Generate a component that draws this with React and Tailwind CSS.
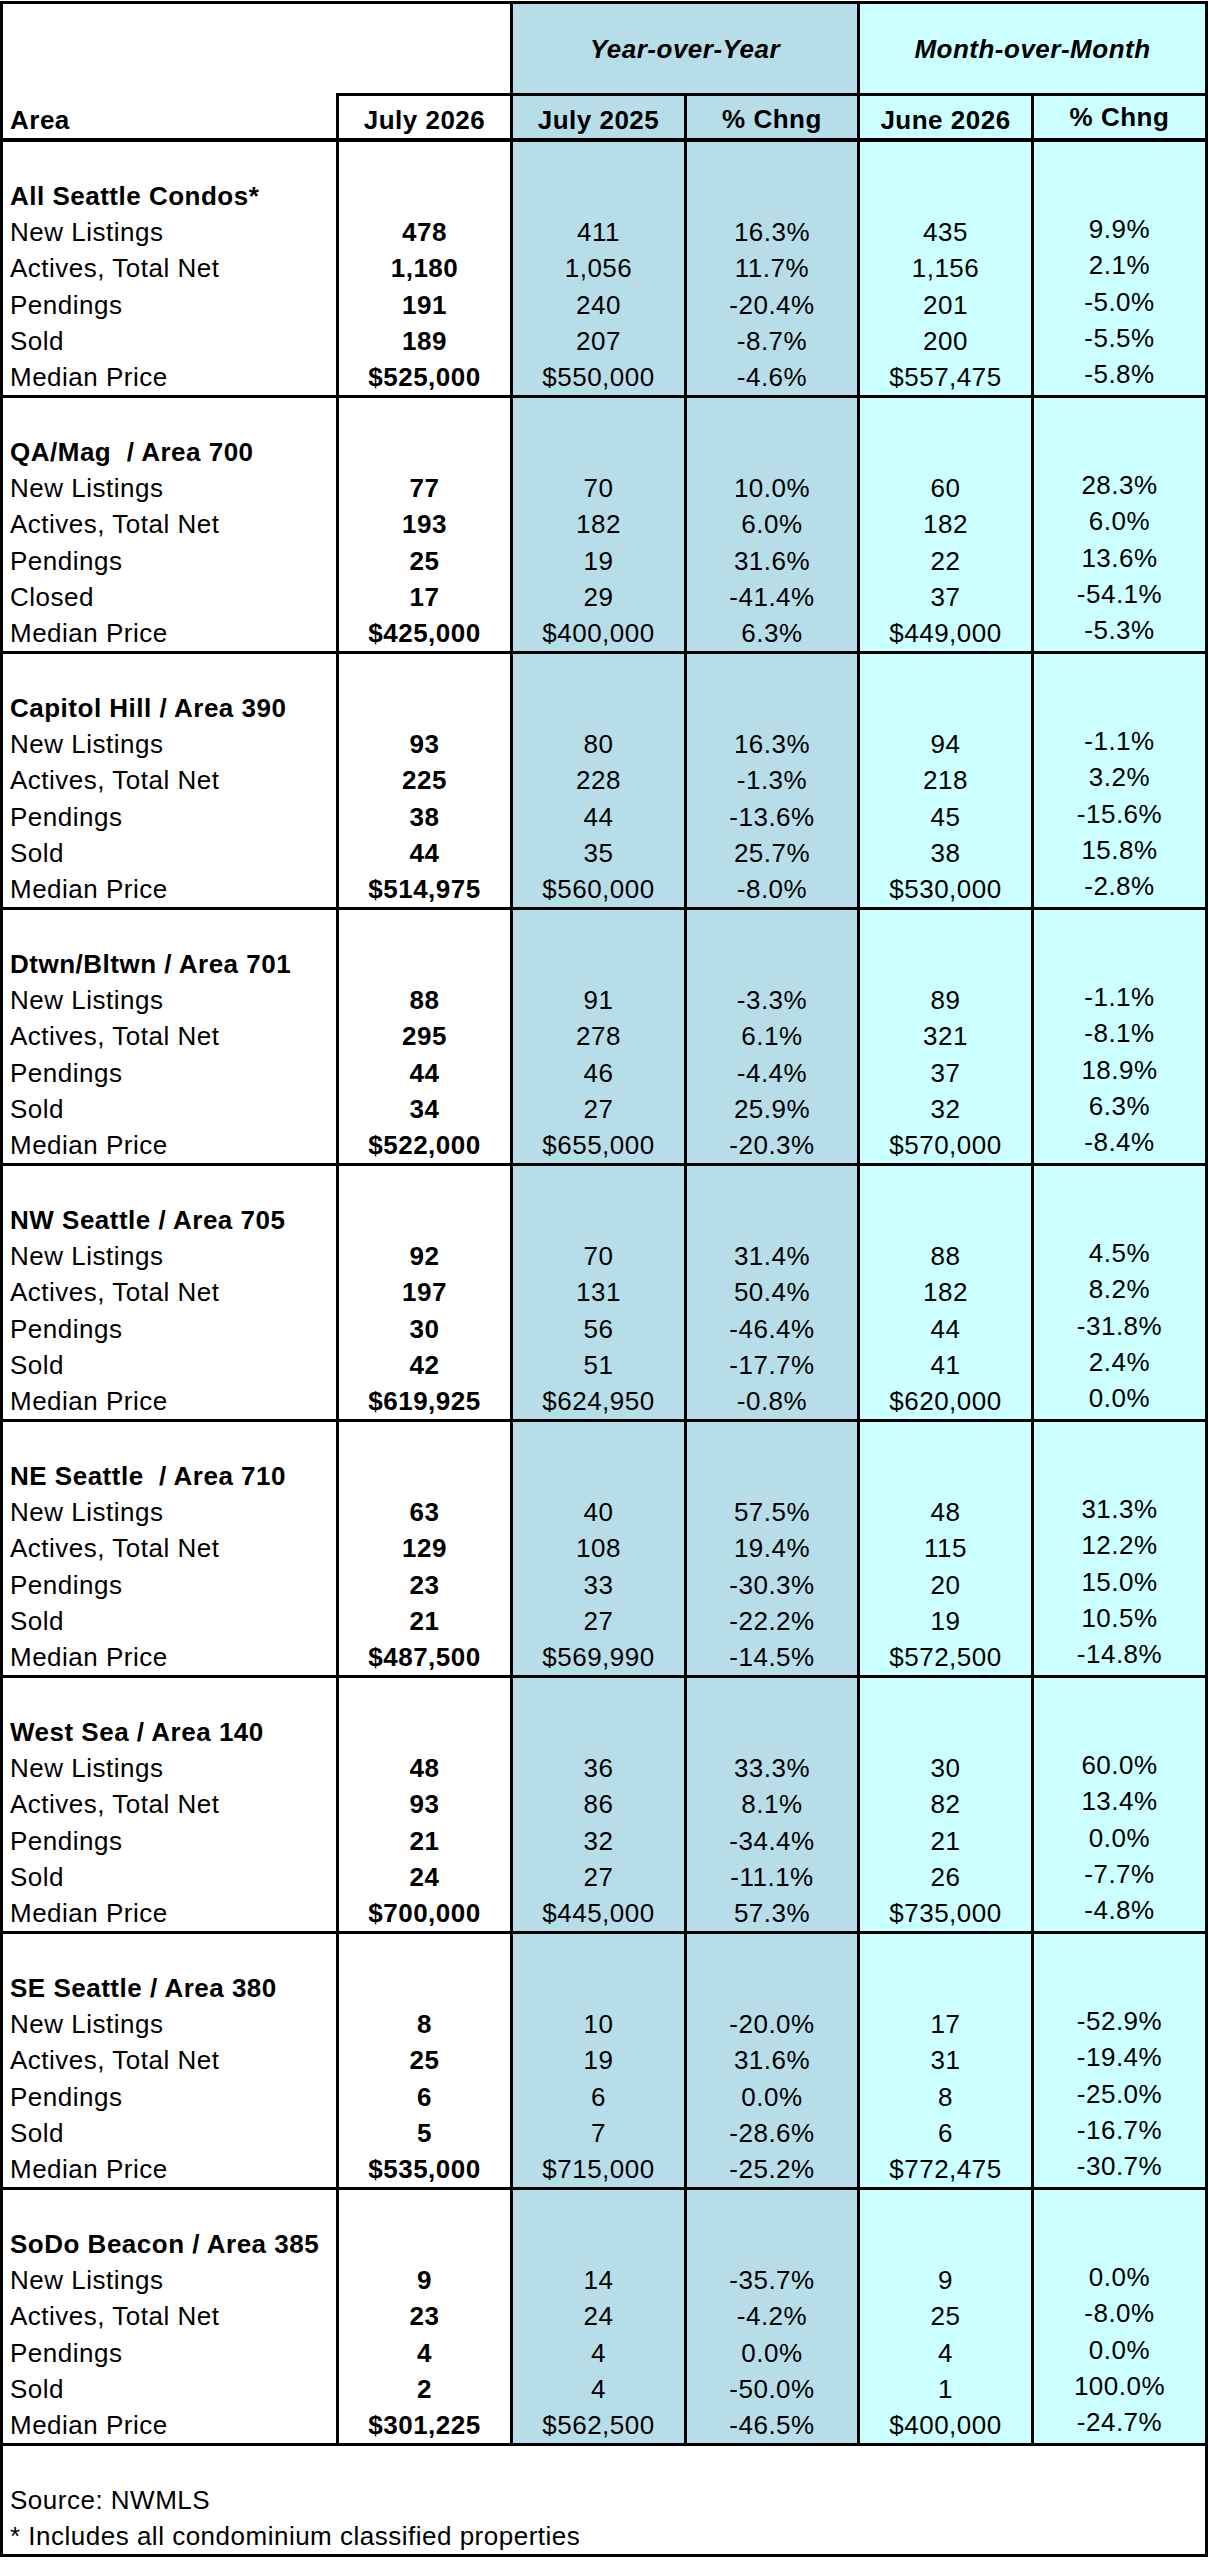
const blocks = [
  {
    title: "All Seattle Condos*",
    rows: [
      ["New Listings", "478", "411", "16.3%", "435", "9.9%"],
      ["Actives, Total Net", "1,180", "1,056", "11.7%", "1,156", "2.1%"],
      ["Pendings", "191", "240", "-20.4%", "201", "-5.0%"],
      ["Sold", "189", "207", "-8.7%", "200", "-5.5%"],
      ["Median Price", "$525,000", "$550,000", "-4.6%", "$557,475", "-5.8%"],
    ],
  },
  {
    title: "QA/Mag  / Area 700",
    rows: [
      ["New Listings", "77", "70", "10.0%", "60", "28.3%"],
      ["Actives, Total Net", "193", "182", "6.0%", "182", "6.0%"],
      ["Pendings", "25", "19", "31.6%", "22", "13.6%"],
      ["Closed", "17", "29", "-41.4%", "37", "-54.1%"],
      ["Median Price", "$425,000", "$400,000", "6.3%", "$449,000", "-5.3%"],
    ],
  },
  {
    title: "Capitol Hill / Area 390",
    rows: [
      ["New Listings", "93", "80", "16.3%", "94", "-1.1%"],
      ["Actives, Total Net", "225", "228", "-1.3%", "218", "3.2%"],
      ["Pendings", "38", "44", "-13.6%", "45", "-15.6%"],
      ["Sold", "44", "35", "25.7%", "38", "15.8%"],
      ["Median Price", "$514,975", "$560,000", "-8.0%", "$530,000", "-2.8%"],
    ],
  },
  {
    title: "Dtwn/Bltwn / Area 701",
    rows: [
      ["New Listings", "88", "91", "-3.3%", "89", "-1.1%"],
      ["Actives, Total Net", "295", "278", "6.1%", "321", "-8.1%"],
      ["Pendings", "44", "46", "-4.4%", "37", "18.9%"],
      ["Sold", "34", "27", "25.9%", "32", "6.3%"],
      ["Median Price", "$522,000", "$655,000", "-20.3%", "$570,000", "-8.4%"],
    ],
  },
  {
    title: "NW Seattle / Area 705",
    rows: [
      ["New Listings", "92", "70", "31.4%", "88", "4.5%"],
      ["Actives, Total Net", "197", "131", "50.4%", "182", "8.2%"],
      ["Pendings", "30", "56", "-46.4%", "44", "-31.8%"],
      ["Sold", "42", "51", "-17.7%", "41", "2.4%"],
      ["Median Price", "$619,925", "$624,950", "-0.8%", "$620,000", "0.0%"],
    ],
  },
  {
    title: "NE Seattle  / Area 710",
    rows: [
      ["New Listings", "63", "40", "57.5%", "48", "31.3%"],
      ["Actives, Total Net", "129", "108", "19.4%", "115", "12.2%"],
      ["Pendings", "23", "33", "-30.3%", "20", "15.0%"],
      ["Sold", "21", "27", "-22.2%", "19", "10.5%"],
      ["Median Price", "$487,500", "$569,990", "-14.5%", "$572,500", "-14.8%"],
    ],
  },
  {
    title: "West Sea / Area 140",
    rows: [
      ["New Listings", "48", "36", "33.3%", "30", "60.0%"],
      ["Actives, Total Net", "93", "86", "8.1%", "82", "13.4%"],
      ["Pendings", "21", "32", "-34.4%", "21", "0.0%"],
      ["Sold", "24", "27", "-11.1%", "26", "-7.7%"],
      ["Median Price", "$700,000", "$445,000", "57.3%", "$735,000", "-4.8%"],
    ],
  },
  {
    title: "SE Seattle / Area 380",
    rows: [
      ["New Listings", "8", "10", "-20.0%", "17", "-52.9%"],
      ["Actives, Total Net", "25", "19", "31.6%", "31", "-19.4%"],
      ["Pendings", "6", "6", "0.0%", "8", "-25.0%"],
      ["Sold", "5", "7", "-28.6%", "6", "-16.7%"],
      ["Median Price", "$535,000", "$715,000", "-25.2%", "$772,475", "-30.7%"],
    ],
  },
  {
    title: "SoDo Beacon / Area 385",
    rows: [
      ["New Listings", "9", "14", "-35.7%", "9", "0.0%"],
      ["Actives, Total Net", "23", "24", "-4.2%", "25", "-8.0%"],
      ["Pendings", "4", "4", "0.0%", "4", "0.0%"],
      ["Sold", "2", "4", "-50.0%", "1", "100.0%"],
      ["Median Price", "$301,225", "$562,500", "-46.5%", "$400,000", "-24.7%"],
    ],
  },
];

const Row = ({ cells, title }) => (
  <div className="flex h-[36.15px]">
    <div
      className={
        "w-[333px] pl-[7px] flex items-center whitespace-pre " +
        (title ? "font-bold" : "")
      }
    >
      {cells[0]}
    </div>
    <div className="w-[174px] border-l-[3px] border-black flex items-center justify-center font-bold">
      {cells[1]}
    </div>
    <div className="w-[174px] border-l-[3px] border-black bg-[#b7dee8] flex items-center justify-center">
      {cells[2]}
    </div>
    <div className="w-[173px] border-l-[3px] border-black bg-[#b7dee8] flex items-center justify-center">
      {cells[3]}
    </div>
    <div className="w-[174px] border-l-[3px] border-black bg-[#ccffff] flex items-center justify-center">
      {cells[4]}
    </div>
    <div className="w-[174px] border-l-[3px] border-black bg-[#ccffff] flex items-center justify-center pb-[6px]">
      {cells[5]}
    </div>
  </div>
);

const App = () => {
  return (
    <div className="bg-white w-[1209px] h-[2560px] pt-px text-black font-['Liberation_Sans',Arial,sans-serif] text-[26px] tracking-[0.5px] leading-[30px]">
      <div className="w-[1208px] border-[3px] border-black">
        {/* header */}
        <div className="flex border-b-[4px] border-black">
          <div className="w-[333px] h-[134px] pl-[7px] pb-[3px] flex items-end font-bold">
            Area
          </div>
          <div className="flex flex-col">
            <div className="flex h-[92px] border-b-[3px] border-black">
              <div className="w-[174px]"></div>
              <div className="w-[347px] border-l-[3px] border-black bg-[#b7dee8] flex items-center justify-center font-bold italic">
                Year-over-Year
              </div>
              <div className="w-[348px] border-l-[3px] border-black bg-[#ccffff] flex items-center justify-center font-bold italic">
                Month-over-Month
              </div>
            </div>
            <div className="flex h-[42px] font-bold">
              <div className="w-[174px] border-l-[3px] border-black flex items-end justify-center pb-[3px]">
                July 2026
              </div>
              <div className="w-[174px] border-l-[3px] border-black bg-[#b7dee8] flex items-end justify-center pb-[3px]">
                July 2025
              </div>
              <div className="w-[173px] border-l-[3px] border-black bg-[#b7dee8] flex items-end justify-center pb-[4px]">
                % Chng
              </div>
              <div className="w-[174px] border-l-[3px] border-black bg-[#ccffff] flex items-end justify-center pb-[3px]">
                June 2026
              </div>
              <div className="w-[174px] border-l-[3px] border-black bg-[#ccffff] flex items-end justify-center pb-[6px]">
                % Chng
              </div>
            </div>
          </div>
        </div>

        {/* area blocks */}
        {blocks.map((b, i) => (
          <div
            key={b.title}
            className={i < blocks.length - 1 ? "border-b-[3px] border-black" : ""}
          >
            <Row cells={["", "", "", "", "", ""]} />
            <Row cells={[b.title, "", "", "", "", ""]} title />
            {b.rows.map((r) => (
              <Row key={r[0]} cells={r} />
            ))}
          </div>
        ))}

        {/* footer */}
        <div className="border-t-[3px] border-black pl-[7px]">
          <div className="h-[36.15px]"></div>
          <div className="h-[36.15px] flex items-center">Source: NWMLS</div>
          <div className="h-[36.15px] flex items-center">
            * Includes all condominium classified properties
          </div>
        </div>
      </div>
    </div>
  );
};

export default App;
